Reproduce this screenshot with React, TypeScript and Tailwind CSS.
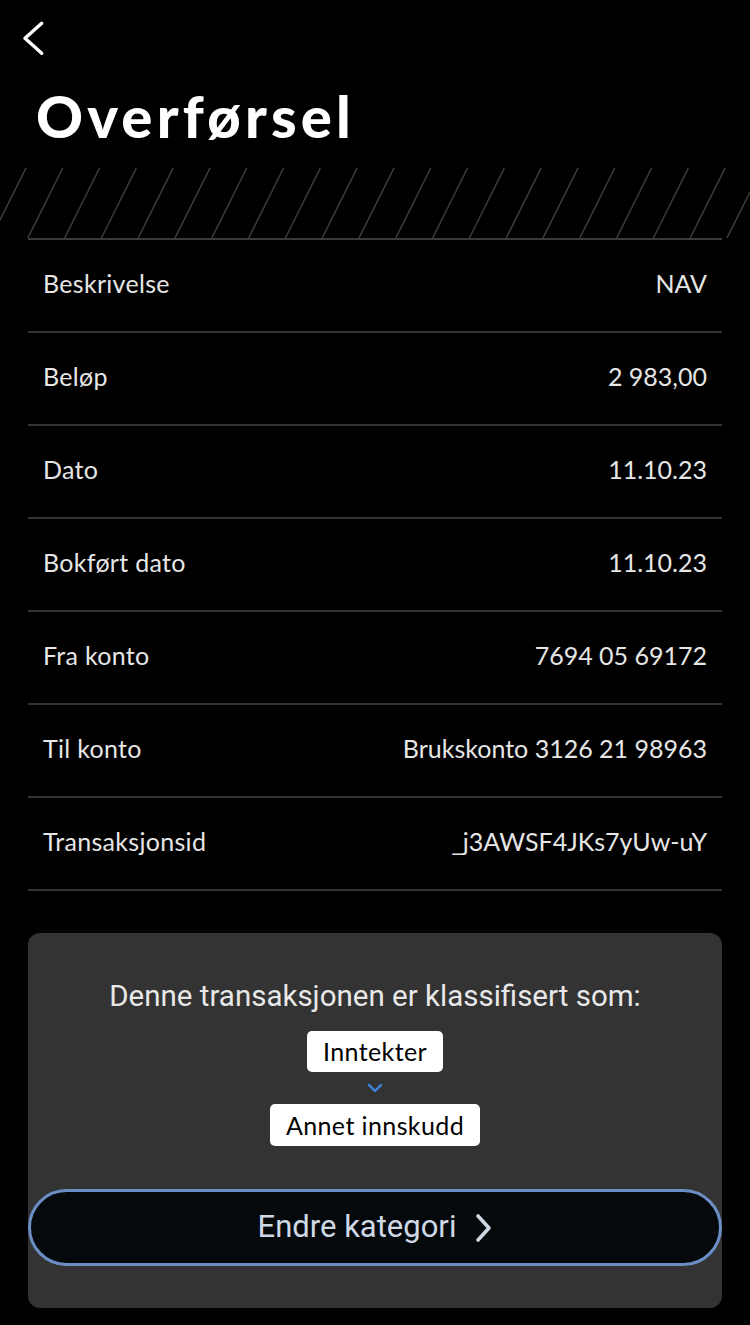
import React from "react";

const rows: { label: string; value: string }[] = [
  { label: "Beskrivelse", value: "NAV" },
  { label: "Beløp", value: "2 983,00" },
  { label: "Dato", value: "11.10.23" },
  { label: "Bokført dato", value: "11.10.23" },
  { label: "Fra konto", value: "7694 05 69172" },
  { label: "Til konto", value: "Brukskonto 3126 21 98963" },
  { label: "Transaksjonsid", value: "_j3AWSF4JKs7yUw-uY" },
];

function Hatch() {
  const lines = [];
  for (let i = -2; i < 22; i++) {
    const x = 26 + i * 36.8;
    lines.push(<line key={i} x1={x} y1={0} x2={x - 35} y2={70} />);
  }
  return (
    <svg width="750" height="70" viewBox="0 0 750 70" className="block">
      <g stroke="#3a3a3a" strokeWidth="1.6">{lines}</g>
    </svg>
  );
}

export default function App() {
  return (
    <div className="min-h-[1325px] w-[750px] bg-black font-['Lato',sans-serif] text-[#e6e6e6]">
      {/* Header */}
      <div className="pl-[22px] pt-[20px]">
        <svg width="24" height="36" viewBox="0 0 24 36" fill="none">
          <path d="M19.7 3.3 L3 18.3 L19.7 33.3" stroke="white" strokeWidth="3.4" strokeLinecap="round" strokeLinejoin="round" />
        </svg>
      </div>
      <h1 className="mt-[25px] pl-[36px] text-[58px] font-black leading-[70px] tracking-[4.2px] text-white">
        Overførsel
      </h1>

      <div className="mt-[17px]">
        <Hatch />
      </div>

      {/* Details */}
      <div className="mx-[28px] border-t-2 border-[#3a3a3a]">
        {rows.map((r) => (
          <div
            key={r.label}
            className="flex h-[93px] items-center justify-between border-b-2 border-[#333333] px-[15px] pb-[4px] text-[25px]"
          >
            <span className="tracking-[0.3px]">{r.label}</span>
            <span>{r.value}</span>
          </div>
        ))}
      </div>

      {/* Category card */}
      <div className="mx-[28px] mt-[42px] flex flex-col items-center rounded-[12px] bg-[#333333] pb-[42px] pt-[44px]">
        <p className="font-['Roboto',sans-serif] text-[29.5px] leading-[38px] text-[#e8e8e8]">
          Denne transaksjonen er klassifisert som:
        </p>
        <div className="mt-[16px] rounded-[5px] bg-white px-[16px] py-[5px] text-[25px] leading-[31px] tracking-[0.4px] text-black">
          Inntekter
        </div>
        <svg width="20" height="12" viewBox="0 0 20 12" className="my-[10px]" fill="none">
          <path d="M4 3 L10 9 L16 3" stroke="#3d86e6" strokeWidth="2.4" strokeLinecap="round" strokeLinejoin="round" />
        </svg>
        <div className="rounded-[5px] bg-white px-[16px] py-[5px] text-[25px] leading-[32px] tracking-[0.4px] text-black">
          Annet innskudd
        </div>
        <button className="mt-[43px] flex h-[77px] w-full items-center justify-center gap-[18px] rounded-full border-[3px] border-[#6b8fc4] bg-[#05090c] font-['Roboto',sans-serif] text-[31px] text-[#cfd9e6]">
          <span>Endre kategori</span>
          <svg width="18" height="30" viewBox="0 0 18 30" fill="none">
            <path d="M4 3 L15 15 L4 27" stroke="#cfd9e6" strokeWidth="3.6" strokeLinecap="round" strokeLinejoin="round" />
          </svg>
        </button>
      </div>
    </div>
  );
}
